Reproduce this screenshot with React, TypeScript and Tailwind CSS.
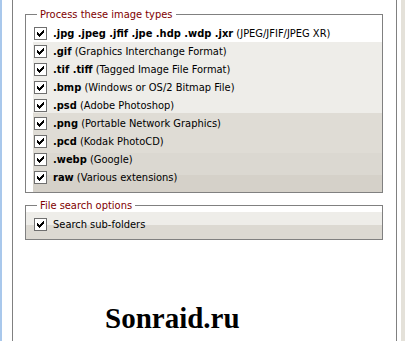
import React from "react";

const CHECK = [
  "......X",
  ".....XX",
  "X...XXX",
  "XX.XXX.",
  "XXXXX..",
  ".XXX...",
  "..X....",
];

const CheckBox = () => (
  <span className="flex h-[13px] w-[13px] shrink-0 items-center justify-center border border-[#6f6f6f] bg-white">
    <svg width="7" height="7" viewBox="0 0 7 7" shapeRendering="crispEdges">
      {CHECK.flatMap((row, y) =>
        row.split("").map((c, x) =>
          c === "X" ? <rect key={`${x}-${y}`} x={x} y={y} width="1" height="1" fill="#000" /> : null
        )
      )}
    </svg>
  </span>
);

const types = [
  { ext: ".jpg .jpeg .jfif .jpe .hdp .wdp .jxr", desc: "(JPEG/JFIF/JPEG XR)" },
  { ext: ".gif", desc: "(Graphics Interchange Format)" },
  { ext: ".tif .tiff", desc: "(Tagged Image File Format)" },
  { ext: ".bmp", desc: "(Windows or OS/2 Bitmap File)" },
  { ext: ".psd", desc: "(Adobe Photoshop)" },
  { ext: ".png", desc: "(Portable Network Graphics)" },
  { ext: ".pcd", desc: "(Kodak PhotoCD)" },
  { ext: ".webp", desc: "(Google)" },
  { ext: "raw", desc: "(Various extensions)" },
];

const Row = ({ ext, desc }: { ext: string; desc: string }) => (
  <div className="flex h-[18px] items-center pl-px">
    <CheckBox />
    <span className="ml-[6px] whitespace-nowrap text-[11px] leading-none text-black">
      <b>{ext}</b> {desc}
    </span>
  </div>
);

export default function App() {
  return (
    <div
      className="flex h-[341px] w-[405px] overflow-hidden bg-white"
      style={{ fontFamily: '"DejaVu Sans Condensed", "DejaVu Sans", sans-serif' }}
    >
      <div className="w-[2px] bg-[#a9c8ec]" />
      <div className="w-[10px]" />
      <div className="w-px bg-[#808080]" />

      <main className="flex w-[383px] flex-col pl-[12px] pr-[13px] pt-[8px]">
        <fieldset className="border border-[#808080]">
          <legend className="ml-[11px] px-[3px] text-[11px] leading-[13px] text-[#800000]">
            Process these image types
          </legend>
          <div className="mt-[3px]">
            <div className="ml-[7px]">
              <Row {...types[0]} />
            </div>
            <div className="ml-[7px] bg-[linear-gradient(to_bottom,#eeede9_0px,#eeede9_71px,#dfdcd5_71px,#dfdcd5_111px,#dbd8d1_111px,#dbd8d1_133px,#d5d1c9_133px)] pb-[6px]">
              {types.slice(1).map((t) => (
                <Row key={t.ext} {...t} />
              ))}
            </div>
          </div>
        </fieldset>

        <fieldset className="mt-[6px] border border-[#808080]">
          <legend className="ml-[11px] bg-white px-[3px] text-[11px] leading-[13px] text-[#800000]">
            File search options
          </legend>
          <div className="bg-[linear-gradient(to_bottom,#eeede9_0px,#eeede9_13px,#dcd9d2_13px)] pb-[6px] pl-[8px] pt-[3px]">
            <div className="flex h-[18px] items-center">
              <CheckBox />
              <span className="ml-[6px] text-[11px] leading-none text-black">Search sub-folders</span>
            </div>
          </div>
        </fieldset>

        <div
          className="ml-[80px] mt-[64px] text-[29px] font-bold leading-none text-black"
          style={{ fontFamily: '"Liberation Serif", serif' }}
        >
          Sonraid.ru
        </div>
      </main>

      <div className="w-px bg-[#808080]" />
      <div className="w-[4px]" />
      <div className="w-[4px] bg-[#e4e1d9]" />
    </div>
  );
}
